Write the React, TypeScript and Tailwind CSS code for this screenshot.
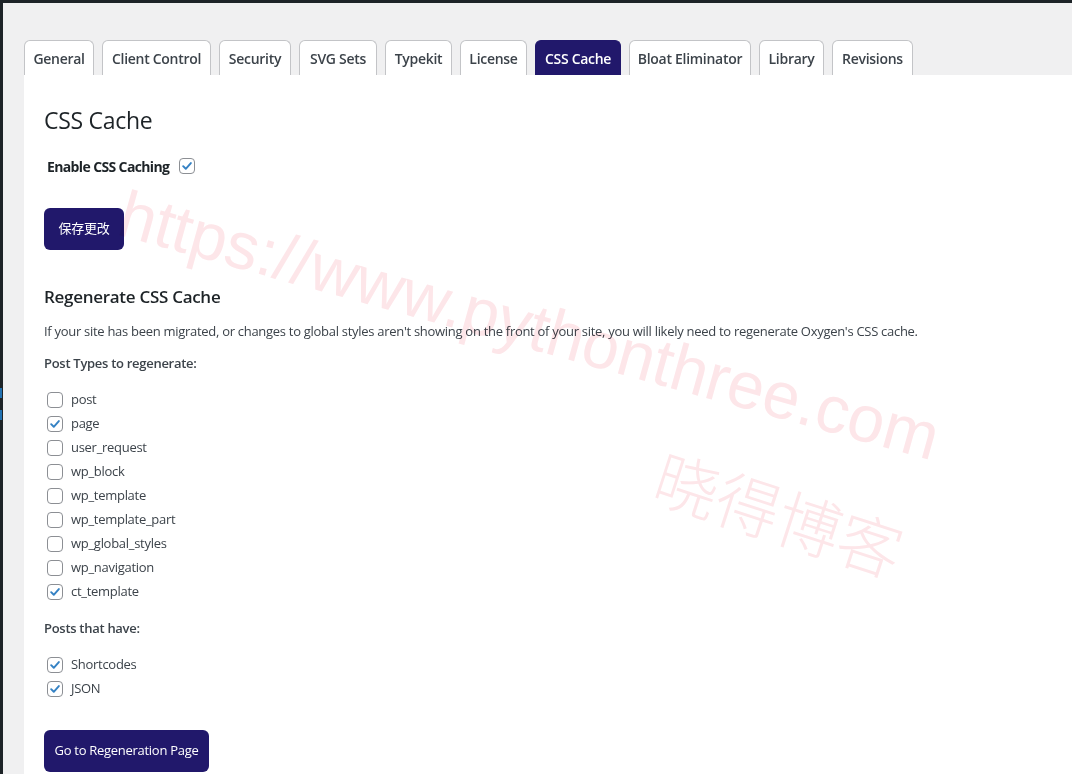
import React from "react";

const font = "font-['Open_Sans','Noto_Sans_CJK_SC',sans-serif] tracking-[-0.018em]";

const tabs = [
  { label: "General", w: "w-[70px]" },
  { label: "Client Control", w: "w-[109px]" },
  { label: "Security", w: "w-[72px]" },
  { label: "SVG Sets", w: "w-[78px]" },
  { label: "Typekit", w: "w-[67px]" },
  { label: "License", w: "w-[67px]" },
  { label: "CSS Cache", w: "w-[86px]", active: true },
  { label: "Bloat Eliminator", w: "w-[122px]" },
  { label: "Library", w: "w-[65px]" },
  { label: "Revisions", w: "w-[81px]" },
];

const postTypes = [
  { name: "post", checked: false },
  { name: "page", checked: true },
  { name: "user_request", checked: false },
  { name: "wp_block", checked: false },
  { name: "wp_template", checked: false },
  { name: "wp_template_part", checked: false },
  { name: "wp_global_styles", checked: false },
  { name: "wp_navigation", checked: false },
  { name: "ct_template", checked: true },
];

const Checkbox = ({ checked }: { checked: boolean }) => (
  <span className="flex h-4 w-4 shrink-0 items-center justify-center rounded-[4px] border border-[#8c8f94] bg-white">
    {checked && (
      <svg viewBox="0 0 16 16" className="h-[14px] w-[14px]">
        <path d="M3.6 8.2 L6.6 11.2 L12.4 4.6" fill="none" stroke="#3582c4" strokeWidth="2.2" strokeLinecap="round" strokeLinejoin="round" />
      </svg>
    )}
  </span>
);

const CheckRow = ({ label, checked }: { label: string; checked: boolean }) => (
  <label className="flex h-6 items-center gap-2 pl-[3px] text-[13px] text-[#3c434a]">
    <Checkbox checked={checked} />
    <span>{label}</span>
  </label>
);

export default function App() {
  return (
    <div className={`relative flex h-[774px] w-[1072px] flex-col overflow-hidden bg-[#f0f0f1] ${font}`}>
      <div className="h-[3px] bg-[#1d2327]" />
      <div className="flex flex-1">
        {/* admin menu edge */}
        <div className="flex w-[3px] flex-col bg-[#1d2327] pt-[385px]">
          <div className="h-[10px] w-[2px] bg-[#2271b1]" />
          <div className="mt-[12px] h-[10px] w-[2px] bg-[#2271b1]" />
        </div>

        <div className="flex flex-1 flex-col pl-[21px] pt-[37px]">
          {/* Tabs */}
          <nav className="flex gap-2">
            {tabs.map((t) => (
              <div
                key={t.label}
                className={`flex h-[35px] items-center justify-center rounded-t-[6px] border border-b-0 text-[14px] font-semibold ${t.w} ${
                  t.active ? "border-[#21186b] bg-[#21186b] text-white" : "border-[#c3c4c7] bg-white text-[#3c434a]"
                }`}
              >
                {t.label}
              </div>
            ))}
          </nav>

          {/* Panel */}
          <div className="flex flex-1 flex-col bg-white pl-5 pt-[31px]">
            <h1 className="text-[23px] leading-[29px] font-normal text-[#1d2327]">CSS Cache</h1>

            <div className="mt-[21px] flex h-5 items-center gap-[10px] pl-[3px]">
              <span className="text-[14px] font-bold tracking-[-0.045em] text-[#1d2327]">Enable CSS Caching</span>
              <Checkbox checked />
            </div>

            <button className="mt-8 flex h-[42px] w-[80px] items-center justify-center rounded-[6px] bg-[#21186b] text-[13px] text-white">
              保存更改
            </button>

            <h2 className="mt-[35px] text-[17px] leading-6 font-semibold text-[#1d2327]">Regenerate CSS Cache</h2>
            <p className="mt-3 text-[13px] leading-5 text-[#3c434a]">
              If your site has been migrated, or changes to global styles aren't showing on the front of your site, you will likely need to regenerate Oxygen's CSS cache.
            </p>

            <p className="mt-3 text-[13px] leading-5 font-semibold text-[#3c434a]">Post Types to regenerate:</p>
            <div className="mt-[15px] flex flex-col">
              {postTypes.map((p) => (
                <CheckRow key={p.name} label={p.name} checked={p.checked} />
              ))}
            </div>

            <p className="mt-[14px] text-[13px] leading-5 font-semibold text-[#3c434a]">Posts that have:</p>
            <div className="mt-[15px] flex flex-col">
              <CheckRow label="Shortcodes" checked />
              <CheckRow label="JSON" checked />
            </div>

            <button className="mt-[29px] flex h-[42px] w-[165px] items-center justify-center rounded-[6px] bg-[#21186b] text-[13px] text-white">
              Go to Regeneration Page
            </button>
          </div>
        </div>
      </div>

      {/* watermark */}
      <div className="pointer-events-none absolute left-[130px] top-[180px] origin-top-left rotate-[15.5deg] whitespace-nowrap font-['Liberation_Sans',sans-serif] text-[66px] leading-none tracking-normal text-[#fde6e9] mix-blend-multiply">
        https://www.pythonthree.com
      </div>
      <div className="pointer-events-none absolute left-[668px] top-[442px] origin-top-left rotate-[18deg] whitespace-nowrap font-['Noto_Sans_CJK_SC',sans-serif] text-[64px] font-light leading-none tracking-normal text-[#fde6e9] mix-blend-multiply">
        晓得博客
      </div>
    </div>
  );
}
